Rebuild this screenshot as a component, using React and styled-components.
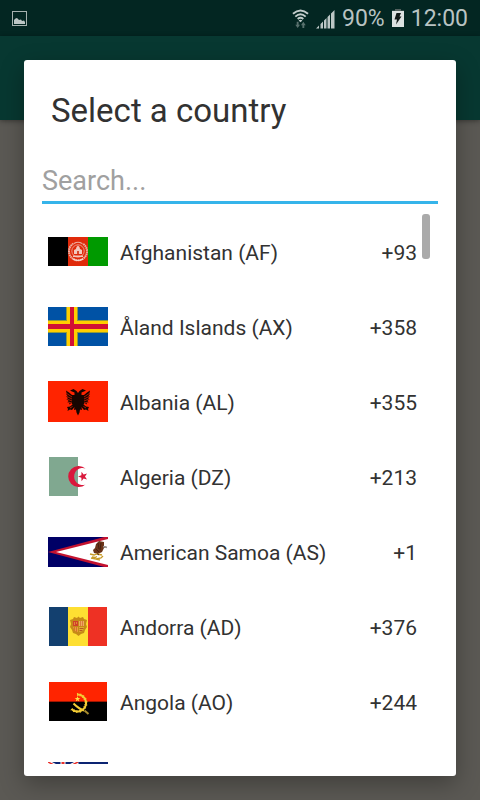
import React, { useState } from "react";
import styled, { createGlobalStyle } from "styled-components";

const GlobalStyle = createGlobalStyle`
  *, *::before, *::after { box-sizing: border-box; }
  html, body, #root { height: 100%; }
  body {
    margin: 0;
    font-family: Roboto, "Liberation Sans", sans-serif;
    background: #5b5954;
  }
`;

const Screen = styled.div`
  display: flex;
  flex-direction: column;
  height: 100%;
  overflow: hidden;
  background: #5b5954;
`;

const StatusBar = styled.header`
  display: flex;
  align-items: center;
  flex: none;
  height: 36px;
  padding: 0 12px;
  background: #032622;
  color: #b9c3c2;
  font-size: 23px;
  line-height: 36px;
`;

const StatusGroup = styled.div`
  display: flex;
  align-items: center;
  gap: 7px;
  margin-left: auto;
  padding-top: 2px;
`;

const StatusIcon = styled.svg`
  display: block;
  flex: none;
`;

const Stage = styled.div`
  position: relative;
  flex: 1;
  min-height: 0;
`;

const Toolbar = styled.div`
  height: 84px;
  background: #073831;
  box-shadow: 0 1px 5px rgba(0, 0, 0, 0.4);
`;

const Overlay = styled.div`
  position: absolute;
  inset: 0;
  display: flex;
  padding: 24px;
`;

const Dialog = styled.section`
  display: flex;
  flex: 1;
  flex-direction: column;
  min-width: 0;
  padding: 0 18px 12px;
  border-radius: 3px;
  background: #fff;
  color: #323232;
  box-shadow: 0 8px 24px rgba(0, 0, 0, 0.3);
`;

const Title = styled.h1`
  margin: 0;
  padding: 31px 9px 27px;
  font-size: 33px;
  font-weight: 400;
  line-height: 40px;
`;

const SearchInput = styled.input`
  flex: none;
  width: 100%;
  height: 46px;
  padding: 3px 0 0;
  border: 0;
  border-bottom: 3px solid #35b4ea;
  border-radius: 0;
  outline: 0;
  background: none;
  color: #323232;
  font: 27px Roboto, "Liberation Sans", sans-serif;
  &::placeholder { color: #a0a0a0; opacity: 1; }
`;

const ListFrame = styled.div`
  position: relative;
  display: flex;
  flex: 1;
  min-height: 0;
  margin-top: 10px;
`;

const List = styled.ul`
  flex: 1;
  margin: 0;
  padding: 0;
  overflow-y: auto;
  list-style: none;
  scrollbar-width: none;
`;

const ScrollThumb = styled.div`
  position: absolute;
  top: 0;
  right: 8px;
  width: 8px;
  height: 45px;
  border-radius: 3px;
  background: #aaa;
`;

const Row = styled.button`
  display: flex;
  align-items: center;
  gap: 12px;
  width: 100%;
  height: 75px;
  padding: 0 21px 0 6px;
  border: 0;
  background: none;
  color: #323232;
  font: 21px/26px Roboto, "Liberation Sans", sans-serif;
  text-align: left;
`;

const FlagSlot = styled.span`
  display: flex;
  flex: none;
  justify-content: center;
  width: 60px;
`;

const Name = styled.span`
  flex: 1;
  padding-top: 2px;
`;

const Code = styled.span`
  padding-top: 2px;
`;

function Flag({ w = 60, h, children }) {
  return (
    <svg width={w} height={h} viewBox={`0 0 ${w} ${h}`} aria-hidden="true">
      {children}
    </svg>
  );
}

const STAR = "M0,-5 L1.2,-1.6 L4.8,-1.5 L1.9,.6 L2.9,4 L0,2 L-2.9,4 L-1.9,.6 L-4.8,-1.5 L-1.2,-1.6Z";

const flags = {
  AF: (
    <Flag h={29}>
      <rect width="20" height="29" fill="#000" />
      <rect x="20" width="20" height="29" fill="#e02a0a" />
      <rect x="40" width="20" height="29" fill="#009a00" />
      <g fill="none" stroke="#eeb0a2">
        <path d="M25.500 6.500A9 9 0 1 0 34.500 6.500" strokeWidth="2" strokeDasharray="1.6 .5" />
        <path d="M26 6.500Q30 4 34 6.500" strokeWidth="1.200" />
        <circle cx="30" cy="14" r="6.200" strokeWidth=".8" />
      </g>
      <path d="M26 17V13l2-1q0-2.500 2-3.500q2 1 2 3.500l2 1v4zM25 18.500h10v1.500h-10z" fill="#f3c8bd" />
      <path d="M29 17v-3h2v3z" fill="#d8492f" />
      <path d="M25 22q5 3 10 0" stroke="#f6d8d0" strokeWidth="1.200" fill="none" />
    </Flag>
  ),
  AX: (
    <Flag h={39}>
      <rect width="60" height="39" fill="#0052a5" />
      <path d="M18 0h12v39H18zM0 13h60v13H0z" fill="#8f9a3c" />
      <path d="M19 0h10v39H19zM0 14h60v11H0z" fill="#ffce00" />
      <path d="M22 0h4v39h-4zM0 17h60v5H0z" fill="#d21034" />
    </Flag>
  ),
  AL: (
    <Flag h={41}>
      <rect width="60" height="41" fill="#ff2400" />
      <path
        fill="#160500"
        d="M30 12 L28.500 10 L25.500 8 L22 9.500 L24 10.500 L26.500 11.500 L26.500 14 L24 14 L21 11.500 L18 9.500 L18.500 12 L18 13 L19.500 14.500 L18 15.500 L20 17 L18.500 18.500 L20.500 19.500 L19.500 21.500 L21.500 21.500 L21 23.500 L23.500 22 L24.500 23.500 L22 25.500 L19 26 L20 28 L19.500 30 L22 28.500 L24 29 L26.500 26 L26 29 L28 28.500 L28.500 31.500 L30 34.500 L31.500 31.500 L32 28.500 L34 29 L33.500 26 L36 29 L38 28.500 L40.500 30 L40 28 L41 26 L38 25.500 L35.500 23.500 L36.500 22 L39 23.500 L38.500 21.500 L40.500 21.500 L39.500 19.500 L41.500 18.500 L40 17 L42 15.500 L40.500 14.500 L42 13 L41.500 12 L42 9.500 L39 11.500 L36 14 L33.500 14 L33.500 11.500 L36 10.500 L38 9.500 L34.500 8 L31.500 10Z"
      />
      <path
        d="M18 12l6 4M18 15l6 3M19 18l5 2M20 21l4 1M42 12l-6 4M42 15l-6 3M41 18l-5 2M40 21l-4 1M22 27l2.500-1.500M38 27l-2.500-1.500"
        stroke="#e62100"
        strokeWidth=".7"
      />
    </Flag>
  ),
  DZ: (
    <Flag w={58} h={39}>
      <rect width="58" height="39" fill="#fff" />
      <rect width="29" height="39" fill="#80a890" />
      <path d="M36.500 11.500A10.500 10.500 0 1 0 36.500 27.500A8.500 8.500 0 1 1 36.500 11.500Z" fill="#d9183b" />
      <path d={STAR} transform="translate(34 19.500) rotate(-90)" fill="#d9183b" />
    </Flag>
  ),
  AS: (
    <Flag h={30}>
      <rect width="60" height="30" fill="#000066" />
      <path d="M0 15L60 -1V31Z" fill="#c4122f" />
      <path d="M8 15L60 2V28Z" fill="#fff" />
      <path d="M51 4L56 5V9L59 10L56 11L54 15L50 17L46 16L45 13L47 11L48 7Z" fill="#6a3318" />
      <path d="M50 6l1 6M53 6l-1 7M48 12l3 3" stroke="#3b1a0c" strokeWidth=".8" />
      <path d="M55 9.500l4 1" stroke="#9a9a9a" strokeWidth="1.500" />
      <path d="M42 17l4 1 3-1 5 1M44 20l3 .500 2-1M43 21l5 1 5-1 2-2M48 22l4 1" stroke="#c89b26" strokeWidth="1.300" fill="none" />
      <path d="M49 16.500l2 1.500" stroke="#5b2a14" strokeWidth="1" />
    </Flag>
  ),
  AD: (
    <Flag w={58} h={39}>
      <rect width="20" height="39" fill="#13406f" />
      <rect x="19" width="20" height="39" fill="#fedf32" />
      <rect x="39" width="19" height="39" fill="#ee3124" />
      <path
        d="M21 13l3-1 1-2 3 1 1.500-1.500 1.500 1.500 3-1 1 2 3 1-1 4 1 3-2 3-1 3-3 1-2.500 2-2.500-2-3-1-1-3-2-3 1-3Z"
        fill="#c68a17"
      />
      <path d="M24 14h5v5h-5z" fill="#d2402b" />
      <path d="M25.500 15v3M27.500 15v2" stroke="#e08a35" />
      <path d="M30 14h5v5h-5z" fill="#ecae61" />
      <path d="M31.500 14v5M33.500 14v5" stroke="#dd7a40" />
      <path d="M24 20h5v5l-3-1z" fill="#e6a53a" />
      <path d="M25.500 20v4M27.500 20v5" stroke="#d8702f" />
      <path d="M30 20h5l-1 4-4 1z" fill="#e0aa34" />
      <path d="M30.500 21.500h4M30.500 23.500h3" stroke="#b75b1f" />
    </Flag>
  ),
  AO: (
    <Flag w={58} h={39}>
      <rect width="58" height="39" fill="#000" />
      <rect width="58" height="19" fill="#ff2400" />
      <rect y="19" width="58" height="1" fill="#a01500" />
      <path d="M28 12.500A8.500 8.500 0 1 1 22.500 27" fill="none" stroke="#f3cc35" strokeWidth="2" />
      <path d="M28 12.500A8.500 8.500 0 1 1 22.500 27" fill="none" stroke="#f3cc35" strokeWidth="3" strokeDasharray="1 2" />
      <path d="M24.500 21.500Q30 27 35 28.500" stroke="#f3cc35" strokeWidth="2" fill="none" />
      <path d="M35.500 28.500l4 3.500" stroke="#a88c2e" strokeWidth="2" />
      <path d={STAR} transform="translate(28.500 17) scale(.6)" fill="#ffdf42" />
    </Flag>
  ),
  AI: (
    <Flag h={30}>
      <rect width="60" height="30" fill="#0c2472" />
      <path d="M0 0L30 15M30 0L0 15" stroke="#fff" strokeWidth="3.500" />
      <path d="M0 0L30 15M30 0L0 15" stroke="#e8302c" strokeWidth="1.500" />
      <path d="M15 0V15M0 7.500H30" stroke="#fff" strokeWidth="5" />
      <path d="M15 0V15M0 7.500H30" stroke="#e8302c" strokeWidth="3" />
      <rect y="15" width="30" height="3" fill="#0c2472" />
      <path d="M40 8h12v8q-1 5-6 7q-5-2-6-7z" fill="#fff" />
      <path d="M41 17h10q-1 4-5 5q-4-1-5-5z" fill="#5fc1e8" />
      <circle cx="46" cy="12" r="2.500" fill="none" stroke="#f39b2b" strokeWidth="1.500" />
    </Flag>
  ),
};

const countries = [
  { iso: "AF", name: "Afghanistan", code: "+93" },
  { iso: "AX", name: "Åland Islands", code: "+358" },
  { iso: "AL", name: "Albania", code: "+355" },
  { iso: "DZ", name: "Algeria", code: "+213" },
  { iso: "AS", name: "American Samoa", code: "+1" },
  { iso: "AD", name: "Andorra", code: "+376" },
  { iso: "AO", name: "Angola", code: "+244" },
  { iso: "AI", name: "Anguilla", code: "+1" },
];

function PictureIcon() {
  return (
    <StatusIcon width="15" height="15" viewBox="0 0 15 15" aria-hidden="true">
      <rect x=".5" y=".5" width="14" height="14" fill="none" stroke="#a5b1af" />
      <path d="M2 13V9l1.500-1.500L5 7l1 1 1 1 2-.5L10 10l2-.5L13 11v2z" fill="#bcc6c5" />
    </StatusIcon>
  );
}

function WifiIcon() {
  return (
    <StatusIcon width="17" height="20" viewBox="0 0 18 20" aria-hidden="true">
      <g fill="none" stroke="#c3cccb" strokeWidth="2">
        <path d="M1 4.500Q9-2.500 17 4.500" />
        <path d="M3.500 7.500Q9 2.500 14.500 7.500" />
        <path d="M6 10Q9 7.500 12 10" />
      </g>
      <path d="M7 11.500Q9 10 11 11.500L9 13.500z" fill="#c3cccb" />
      <path d="M5 13h2v3h1.500l-2.500 3.500L3.500 16H5zM11 19.500h2v-3h1.500L12 13l-2.500 3.500H11z" fill="#58706d" />
    </StatusIcon>
  );
}

function SignalIcon() {
  return (
    <StatusIcon width="19" height="19" viewBox="0 0 19 19" aria-hidden="true">
      <path
        d="M0 18.500l3-3v3zM4.500 14l2.500-2.500v7H4.500zM8 10.500L10.500 8v10.500H8zM11.500 7L14 4.500v14h-2.500zM15 3.500L18.500 0v18.500H15z"
        fill="#bcc6c5"
      />
    </StatusIcon>
  );
}

function BatteryIcon() {
  return (
    <StatusIcon width="12" height="20" viewBox="0 0 12 20" aria-hidden="true">
      <path d="M3 0h6v1.500h3V3H0V1.500h3z" fill="#53615f" />
      <path d="M0 2h12v16H0z" fill="#dce1e1" />
      <path d="M4.500 4H9L7.500 7.500H9.500L4 15.500L5 10.500H2.500z" fill="#101817" />
    </StatusIcon>
  );
}

export default function App() {
  const [query, setQuery] = useState("");
  const shown = countries.filter((c) => c.name.toLowerCase().includes(query.toLowerCase()));

  return (
    <Screen>
      <GlobalStyle />
      <StatusBar>
        <PictureIcon />
        <StatusGroup>
          <WifiIcon />
          <SignalIcon />
          <span>90%</span>
          <BatteryIcon />
          <span>12:00</span>
        </StatusGroup>
      </StatusBar>
      <Stage>
        <Toolbar />
        <Overlay>
          <Dialog role="dialog" aria-labelledby="dialog-title">
            <Title id="dialog-title">Select a country</Title>
            <SearchInput
              type="text"
              aria-label="Search"
              placeholder="Search..."
              value={query}
              onChange={(e) => setQuery(e.target.value)}
            />
            <ListFrame>
              <List>
                {shown.map((c) => (
                  <li key={c.iso}>
                    <Row type="button">
                      <FlagSlot>{flags[c.iso]}</FlagSlot>
                      <Name>{`${c.name} (${c.iso})`}</Name>
                      <Code>{c.code}</Code>
                    </Row>
                  </li>
                ))}
              </List>
              <ScrollThumb />
            </ListFrame>
          </Dialog>
        </Overlay>
      </Stage>
    </Screen>
  );
}
